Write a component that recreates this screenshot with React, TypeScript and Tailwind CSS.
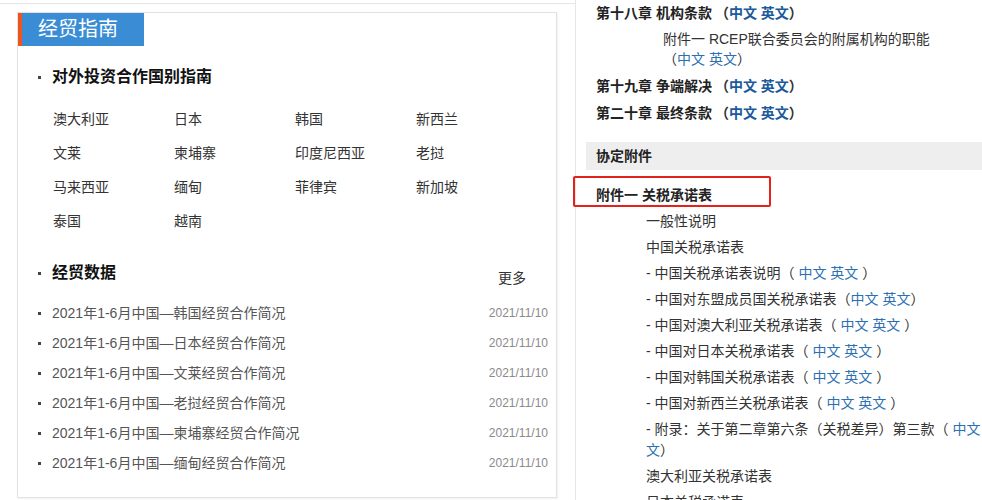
const font = { fontFamily: '"Liberation Sans", "Noto Sans CJK SC", sans-serif' };

const countries = [
  '澳大利亚', '日本', '韩国', '新西兰',
  '文莱', '柬埔寨', '印度尼西亚', '老挝',
  '马来西亚', '缅甸', '菲律宾', '新加坡',
  '泰国', '越南',
];

const news = ['韩国', '日本', '文莱', '老挝', '柬埔寨', '缅甸'];

function Dot() {
  return <span className="inline-block w-[3px] h-[3px] bg-[#444] mr-[11px] shrink-0" />;
}

function Links({ bold, spaced }: { bold?: boolean; spaced?: boolean }) {
  return (
    <>
      <span className="text-[#333]">（</span>
      {spaced && ' '}
      <span className={bold ? 'text-[#1b5a9b]' : 'text-[#2c70b3]'}>中文 英文</span>
      {spaced && ' '}
      <span className="text-[#333]">）</span>
    </>
  );
}

function Chapter({ title }: { title: string }) {
  return (
    <div className="leading-[27px] text-[14px] font-bold text-[#222]">
      {title}
      <span className="ml-[3px]" />
      <Links bold />
    </div>
  );
}

const tariffs: { text: string; spaced?: boolean }[] = [
  { text: '- 中国关税承诺表说明', spaced: true },
  { text: '- 中国对东盟成员国关税承诺表' },
  { text: '- 中国对澳大利亚关税承诺表', spaced: true },
  { text: '- 中国对日本关税承诺表', spaced: true },
  { text: '- 中国对韩国关税承诺表', spaced: true },
  { text: '- 中国对新西兰关税承诺表', spaced: true },
];

export default function App() {
  return (
    <div className="relative w-[982px] h-[500px] overflow-hidden bg-white flex" style={font}>
      {/* left column */}
      <div className="w-[575px] shrink-0 pt-[3px]">
        <div className="border-t border-[#e6e6e6] pt-[8px] pl-[17px]">
          <div className="w-[540px] h-[486px] border border-[#e2e2e2] shadow-[1px_1px_2px_rgba(0,0,0,0.06)]">
            <div className="flex h-[33px]">
              <div className="w-[4px] bg-[#ea5520]" />
              <div className="w-[122px] bg-[#3a8dd4] text-white text-[20px] leading-[33px] pl-[16px]">经贸指南</div>
            </div>

            <div className="flex items-center pl-[20px] mt-[19px] h-[24px]">
              <Dot />
              <span className="text-[16px] font-bold text-[#111]">对外投资合作国别指南</span>
            </div>

            <div className="grid grid-cols-[121px_121px_121px_121px] pl-[35px] mt-[13px] text-[14px] text-[#333]">
              {countries.map((c) => (
                <div key={c} className="h-[34px] leading-[34px]">{c}</div>
              ))}
            </div>

            <div className="flex items-start justify-between mt-[23px] pl-[20px] pr-[30px]">
              <div className="flex items-center h-[24px]">
                <Dot />
                <span className="text-[16px] font-bold text-[#111]">经贸数据</span>
              </div>
              <span className="mt-[7px] text-[14px] leading-[20px] text-[#333]">更多</span>
            </div>

            <div className="mt-[10px] pl-[20px] pr-[8px]">
              {news.map((n) => (
                <div key={n} className="flex items-center h-[30px]">
                  <Dot />
                  <span className="text-[14px] text-[#555] flex-1">2021年1-6月中国—{n}经贸合作简况</span>
                  <span className="text-[12px] text-[#8a8a8a]">2021/11/10</span>
                </div>
              ))}
            </div>
          </div>
        </div>
      </div>

      {/* right column */}
      <div className="flex-1 border-l border-[#e6e6e6] pl-[20px] text-[14px]">
        <Chapter title="第十八章 机构条款" />
        <div className="mt-[2px] pl-[67px] leading-[20px] text-[#333]">
          <div>附件一 RCEP联合委员会的附属机构的职能</div>
          <div>
            <Links />
          </div>
        </div>
        <div className="mt-[4px]">
          <Chapter title="第十九章 争端解决" />
        </div>
        <Chapter title="第二十章 最终条款" />

        <div className="mt-[15px] -ml-[10px] h-[28px] leading-[28px] bg-[#eeeeee] pl-[10px] font-bold text-[#222]">协定附件</div>

        <div className="mt-[12px] leading-[27px] font-bold text-[#222]">附件一 关税承诺表</div>

        <div className="mt-[2px] pl-[50px] text-[#333]">
          <div className="leading-[21px] mb-[5px]">一般性说明</div>
          <div className="leading-[21px] mb-[5px]">中国关税承诺表</div>
          {tariffs.map((t) => (
            <div key={t.text} className="leading-[21px] mb-[5px] whitespace-nowrap">
              {t.text}
              <Links spaced={t.spaced} />
            </div>
          ))}
          <div className="leading-[21px] mb-[5px]">
            <div className="whitespace-nowrap">
              - 附录：关于第二章第六条（关税差异）第三款<span>（</span> <span className="text-[#2c70b3]">中文 英</span>
            </div>
            <div>
              <span className="text-[#2c70b3]">文</span>）
            </div>
          </div>
          <div className="leading-[21px] mb-[5px]">澳大利亚关税承诺表</div>
          <div className="leading-[21px] mb-[5px]">日本关税承诺表</div>
        </div>
      </div>

      {/* red annotation frame */}
      <div className="absolute left-[573px] top-[176px] w-[198px] h-[31px] border-2 border-[#e3221c] rounded-[2px]" />
    </div>
  );
}
